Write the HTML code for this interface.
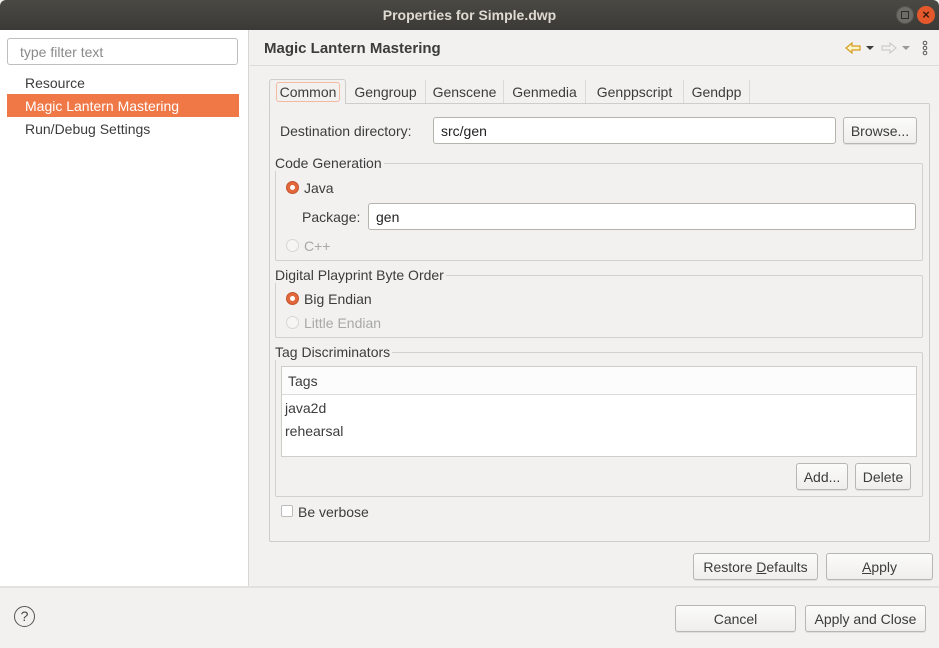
<!DOCTYPE html>
<html><head><meta charset="utf-8"><style>
*{box-sizing:border-box;margin:0;padding:0}
body{width:939px;height:648px;background:#f2f1f0;font-family:"Liberation Sans",sans-serif;font-size:14px;color:#3c3c3c;position:relative;overflow:hidden}
.a{position:absolute;white-space:nowrap}
.btn{position:absolute;border:1px solid #b8b6b2;border-radius:3px;background:linear-gradient(#fbfbfa,#efeeec);text-align:center;color:#3c3c3c;box-shadow:0 1px 0 rgba(0,0,0,.08)}
.inp{position:absolute;border:1px solid #b5b3ae;border-radius:3px;background:#fff;padding-left:7px}
.grp{position:absolute;border:1px solid #d3d1cd;border-radius:2px}
.lg{position:absolute;background:#f2f1f0;padding-right:2px;top:-10px;left:-1px}
.rad{position:absolute;width:13px;height:13px;border-radius:50%}
.on{background:#e2673b;border:1px solid #c3552e}
.on:after{content:"";position:absolute;left:3px;top:3px;width:5px;height:5px;border-radius:50%;background:#fff}
.off{border:1px solid #d8d6d2;background:#f6f5f4}
.tab{position:absolute;top:80px;height:23px;border-right:1px solid #dcdad6;line-height:24px;text-align:center}
</style></head><body>
<div class="a" style="left:0;top:0;width:939px;height:30px;background:linear-gradient(#4a4944,#3b3a36);border-radius:6px 6px 0 0"></div>
<div class="a" style="left:0;top:7px;width:939px;text-align:center;color:#dfdbd2;font-weight:bold;font-size:14px">Properties for Simple.dwp</div>
<div class="a" style="left:896px;top:6px;width:18px;height:18px;border-radius:50%;background:#6d6c67;border:1px solid #55544f"><div style="position:absolute;left:4px;top:4px;width:8px;height:8px;border:1px solid #2e2d2a"></div></div>
<div class="a" style="left:917px;top:6px;width:18px;height:18px;border-radius:50%;background:#e5582c;color:#3a1c10;font-size:13px;line-height:17px;text-align:center;font-weight:bold">×</div>

<div class="a" style="left:0;top:30px;width:249px;height:556px;background:#fff;border-right:1px solid #d8d6d2"></div>
<div class="inp" style="left:7px;top:38px;width:231px;height:27px;line-height:26px;color:#8a8a8a;border-color:#c0beba;padding-left:12px">type filter text</div>
<div class="a" style="left:25px;top:75px">Resource</div>
<div class="a" style="left:7px;top:94px;width:232px;height:23px;background:#f07746"></div>
<div class="a" style="left:25px;top:98px;color:#fff">Magic Lantern Mastering</div>
<div class="a" style="left:25px;top:121px">Run/Debug Settings</div>

<div class="a" style="left:264px;top:40px;font-weight:bold;font-size:15px">Magic Lantern Mastering</div>
<div class="a" style="left:250px;top:65px;width:689px;height:1px;background:#dedcd8"></div>
<svg class="a" style="left:844px;top:40px" width="90" height="16"><path d="M2 8 L8 3 V6 H16 V10 H8 V13 Z" fill="#fff4c8" stroke="#d39c1e" stroke-width="1.2"/><path d="M22 6 H30 L26 10Z" fill="#3c3c3c"/><path d="M52 8 L46 3 V6 H38 V10 H46 V13 Z" fill="none" stroke="#ccc" stroke-width="1.2"/><path d="M58 6 H66 L62 10Z" fill="#999"/><circle cx="81" cy="3" r="1.8" fill="none" stroke="#555"/><circle cx="81" cy="8" r="1.8" fill="none" stroke="#555"/><circle cx="81" cy="13" r="1.8" fill="none" stroke="#555"/></svg>

<div class="a" style="left:269px;top:103px;width:661px;height:439px;border:1px solid #cfcdc9;border-radius:2px"></div>
<div class="a" style="left:269px;top:79px;width:77px;height:25px;border:1px solid #cfcdc9;border-bottom:none;border-radius:3px 3px 0 0;background:#f2f1f0"></div>
<div class="a" style="left:276px;top:82px;width:64px;height:20px;border:1px solid #f4b9a2;border-radius:3px;line-height:19px;text-align:center">Common</div>
<div class="tab" style="left:346px;width:80px">Gengroup</div>
<div class="tab" style="left:426px;width:78px">Genscene</div>
<div class="tab" style="left:504px;width:82px">Genmedia</div>
<div class="tab" style="left:586px;width:98px">Genppscript</div>
<div class="tab" style="left:684px;width:66px">Gendpp</div>

<div class="a" style="left:280px;top:123px">Destination directory:</div>
<div class="inp" style="left:433px;top:117px;width:403px;height:27px;line-height:26px;color:#222">src/gen</div>
<div class="btn" style="left:843px;top:117px;width:74px;height:27px;line-height:26px">Browse...</div>

<div class="grp" style="left:275px;top:163px;width:648px;height:98px"><div class="lg" style="top:-9px">Code Generation</div></div>
<div class="rad on" style="left:286px;top:181px"></div><div class="a" style="left:304px;top:180px">Java</div>
<div class="a" style="left:302px;top:209px">Package:</div>
<div class="inp" style="left:368px;top:203px;width:548px;height:27px;line-height:26px;color:#222">gen</div>
<div class="rad off" style="left:286px;top:239px"></div><div class="a" style="left:304px;top:238px;color:#a8a8a8">C++</div>

<div class="grp" style="left:275px;top:275px;width:648px;height:63px"><div class="lg" style="top:-9px">Digital Playprint Byte Order</div></div>
<div class="rad on" style="left:286px;top:292px"></div><div class="a" style="left:304px;top:291px">Big Endian</div>
<div class="rad off" style="left:286px;top:316px"></div><div class="a" style="left:304px;top:315px;color:#a8a8a8">Little Endian</div>

<div class="grp" style="left:275px;top:352px;width:648px;height:145px"><div class="lg" style="top:-9px">Tag Discriminators</div></div>
<div class="a" style="left:281px;top:366px;width:636px;height:91px;background:#fff;border:1px solid #cfcdc9"></div>
<div class="a" style="left:282px;top:367px;width:634px;height:28px;background:#fcfcfc;border-bottom:1px solid #dedcd8"></div>
<div class="a" style="left:288px;top:373px">Tags</div>
<div class="a" style="left:285px;top:400px">java2d</div>
<div class="a" style="left:285px;top:423px">rehearsal</div>
<div class="btn" style="left:796px;top:463px;width:52px;height:27px;line-height:26px">Add...</div>
<div class="btn" style="left:855px;top:463px;width:56px;height:27px;line-height:26px">Delete</div>

<div class="a" style="left:281px;top:505px;width:12px;height:12px;border:1px solid #bbb;border-radius:2px;background:#fff"></div>
<div class="a" style="left:298px;top:504px">Be verbose</div>

<div class="btn" style="left:693px;top:553px;width:125px;height:27px;line-height:26px">Restore <u>D</u>efaults</div>
<div class="btn" style="left:826px;top:553px;width:107px;height:27px;line-height:26px"><u>A</u>pply</div>

<div class="a" style="left:0;top:586px;width:939px;height:2px;background:#e3e1dd"></div>
<div class="a" style="left:14px;top:606px;width:21px;height:21px;border:1.5px solid #555;border-radius:50%;text-align:center;line-height:18px;font-size:14px;color:#444">?</div>
<div class="btn" style="left:675px;top:605px;width:121px;height:27px;line-height:26px">Cancel</div>
<div class="btn" style="left:805px;top:605px;width:121px;height:27px;line-height:26px">Apply and Close</div>
</body></html>
